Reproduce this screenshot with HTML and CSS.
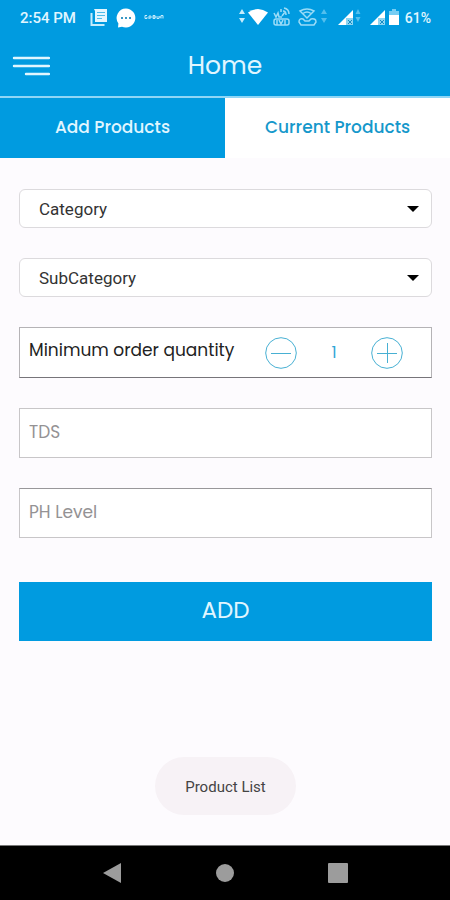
FILE: index.html
```html
<!DOCTYPE html>
<html lang="en">
<head>
<meta charset="utf-8">
<meta name="viewport" content="width=device-width, initial-scale=1">
<title>Home</title>
<link rel="stylesheet" href="styles.css">
</head>
<body>
<div class="status">
  <span class="time">2:54 PM</span>
  <div class="notices">
    <svg width="18" height="20" viewBox="0 0 18 20" aria-hidden="true">
      <path d="M4 1h13v13H5V3z" fill="#e3f6ff"/>
      <path d="M1.500 5v12h13" fill="none" stroke="#c5ecfc" stroke-width="2"/>
      <path d="M7 4.500h8M7 7.500h8M7 10.500h5" stroke="#4dbbe9" stroke-width="1"/>
    </svg>
    <svg width="20" height="20" viewBox="0 0 20 20" aria-hidden="true">
      <path d="M10 .5a9.500 9.500 0 1 1-4 18.200L2 19.500l.4-4A9.500 9.500 0 0 1 10 .5z" fill="#fff"/>
      <path d="M5 10h2M9 10h2M13 10h2" stroke="#3797c4" stroke-width="2"/>
    </svg>
    <svg width="20" height="20" viewBox="0 0 20 20" fill="none" stroke="#c5ecfc" aria-hidden="true">
      <path d="M3 7.500H1v3h2V9M5 11V8h2v2H5M9 10.500v-3h2v3H9M9 9h3M13 8v2.500h2V8M15 9h2M17 10.500v-3h2v3"/>
    </svg>
  </div>
  <div class="signals">
    <svg width="90" height="24" viewBox="239 6 90 24" aria-hidden="true">
      <path d="M242 9l3 5h-6zM242 23l-3-5h6z" fill="#c5ecfc"/>
      <path d="M248 12.500q10-7 20 0L258 25z" fill="#fff"/>
      <g fill="none" stroke="#9bdcf7">
        <path d="M274 13l2 4 2-4 1 4h3M281 12v-3M282 16l3-4M284 8q5 1 5 6M283 11q3 0 3 4" stroke-width="1.500"/>
        <rect x="274" y="19" width="15" height="6" rx="2" stroke-width="1.500"/>
        <path d="M277 20v5M279 20l2 4 2-4M285 20v5" stroke-width="1.500"/>
        <path d="M300 11q7-4 14 0L307 18zM303 13.500q4-3 8 0" stroke-width="1.500"/>
        <path d="M299 22q0-4 4-3l2 2h4l2-2q5-1 5 3l-2 3h-13z" stroke-width="1.500"/>
      </g>
      <path d="M324 9l3 5h-6zM324 23l-3-5h6z" fill="#52bfed"/>
    </svg>
    <svg width="23" height="24" viewBox="338 6 23 24" aria-hidden="true">
      <path d="M353 10v15h-15z" fill="#fff"/>
      <path d="M346 18h7v7h-7z" fill="#8ed5f2"/>
      <path d="M348 20l4 4M352 20l-4 4" stroke="#168cc4"/>
      <path d="M358 9l2.500 5h-5zM358 22l-2.500-5h5z" fill="#52bfed"/>
    </svg>
    <svg width="30" height="24" viewBox="370 6 30 24" aria-hidden="true">
      <path d="M385 10v15h-15z" fill="#fff"/>
      <path d="M378 18h7v7h-7z" fill="#8ed5f2"/>
      <path d="M380 20l4 4M384 20l-4 4" stroke="#168cc4"/>
      <path d="M389 11h3V9h4v2h3v5h-10z" fill="#76cdf3"/>
      <path d="M389 15h10v10h-10z" fill="#fff"/>
    </svg>
    <span class="charge">61%</span>
  </div>
</div>
<header class="bar">
  <button class="menu" type="button" aria-label="Menu">
    <svg width="38" height="22" viewBox="0 0 38 22" stroke="#e0f6ff" stroke-width="2.400" stroke-linecap="round" aria-hidden="true">
      <path d="M2 2h35M2 10h35M14 18h23"/>
    </svg>
  </button>
  <h1>Home</h1>
</header>
<nav class="tabs">
  <a class="tab active" href="#add">Add Products</a>
  <a class="tab" href="#current">Current Products</a>
</nav>
<main>
  <form class="form" id="add">
    <div class="pick">
      <select aria-label="Category"><option>Category</option></select>
      <svg class="caret" width="12" height="6" viewBox="0 0 12 6" aria-hidden="true"><path d="M0 0h12L6 6z"/></svg>
    </div>
    <div class="pick">
      <select aria-label="SubCategory"><option>SubCategory</option></select>
      <svg class="caret" width="12" height="6" viewBox="0 0 12 6" aria-hidden="true"><path d="M0 0h12L6 6z"/></svg>
    </div>
    <div class="quantity">
      <span class="label">Minimum order quantity</span>
      <div class="stepper">
        <button type="button" aria-label="Decrease">
          <svg width="32" height="32" viewBox="0 0 32 32" aria-hidden="true"><circle cx="16" cy="16" r="15.300"/><path d="M6 16.500h20"/></svg>
        </button>
        <output>1</output>
        <button type="button" aria-label="Increase">
          <svg width="32" height="32" viewBox="0 0 32 32" aria-hidden="true"><circle cx="16" cy="16" r="15.300"/><path d="M6 16.500h20M16.500 6v20"/></svg>
        </button>
      </div>
    </div>
    <input class="field" type="text" placeholder="TDS" aria-label="TDS">
    <input class="field strong" type="text" placeholder="PH Level" aria-label="PH Level">
    <button class="add" type="button">ADD</button>
  </form>
  <div class="toast" role="status">Product List</div>
</main>
<footer class="system">
  <button type="button" aria-label="Back"><svg width="20" height="20" viewBox="0 0 20 20"><path d="M1 10L19 0v20z"/></svg></button>
  <button type="button" aria-label="Home screen"><svg width="20" height="20" viewBox="0 0 20 20"><circle cx="10" cy="10" r="9"/></svg></button>
  <button type="button" aria-label="Recent apps"><svg width="20" height="20" viewBox="0 0 20 20"><rect width="20" height="20" rx="1"/></svg></button>
</footer>
</body>
</html>
```
FILE: styles.css
```css
* { box-sizing: border-box; }

body {
  margin: 0;
  min-height: 100vh;
  display: flex;
  flex-direction: column;
  background: #fdfbfe;
  color: #222;
  font-family: Poppins, Inter, sans-serif;
  font-size: 17px;
}

button {
  margin: 0;
  padding: 0;
  border: 0;
  background: none;
  font: inherit;
}

svg { display: block; }

.status {
  display: flex;
  align-items: center;
  height: 36px;
  padding: 0 19px 0 20px;
  background: #009be0;
  color: #e0f6ff;
  font-family: Roboto, sans-serif;
  font-size: 15px;
  font-weight: 500;
}

.notices {
  display: flex;
  gap: 8px;
  margin-left: 14px;
}

.signals {
  display: flex;
  align-items: center;
  gap: 9px;
  margin-left: auto;
}

.charge {
  margin-left: -4px;
  font-size: 14px;
}

.bar {
  display: grid;
  grid-template-columns: 1fr auto 1fr;
  align-items: center;
  height: 62px;
  padding: 0 12px;
  border-bottom: 2px solid #8fd6f6;
  background: #009be0;
  color: #e0f6ff;
}

.menu { justify-self: start; padding-top: 2px; }

h1 {
  margin: 0;
  font-size: 25px;
  font-weight: 400;
}

.tabs { display: flex; }

.tab {
  flex: 1;
  height: 60px;
  padding-top: 18px;
  background: #fff;
  color: #1598cb;
  font-size: 17px;
  font-weight: 500;
  line-height: 22px;
  text-align: center;
  text-decoration: none;
}

.tab.active {
  background: #009be0;
  color: #e0f6ff;
}

main {
  flex: 1;
  display: flex;
  flex-direction: column;
  padding: 31px 18px 30px 19px;
}

.form {
  display: flex;
  flex-direction: column;
  gap: 30px;
}

.pick {
  display: grid;
  align-items: center;
}

.pick > * { grid-area: 1 / 1; }

.pick select {
  width: 100%;
  height: 39px;
  padding: 0 19px;
  border: 1px solid #dcdadd;
  border-radius: 6px;
  appearance: none;
  background: #fff;
  color: #333;
  font-family: Roboto, sans-serif;
  font-size: 17px;
}

.caret {
  justify-self: end;
  margin-right: 13px;
  pointer-events: none;
}

.quantity {
  display: flex;
  justify-content: space-between;
  height: 51px;
  padding: 0 28px 0 9px;
  border: 1px solid #b5b3b6;
  border-bottom-color: #77757a;
  background: #fff;
}

.label {
  padding-top: 11px;
  font-size: 17px;
  line-height: 22px;
}

.stepper {
  display: flex;
  align-items: center;
  justify-content: space-between;
  width: 138px;
  color: #2fa6d6;
  font-size: 16px;
}

.stepper svg {
  fill: none;
  stroke: #48b0d3;
}

.field {
  width: 100%;
  height: 50px;
  padding: 0 9px 2px;
  border: 1px solid #c8c6c8;
  border-radius: 0;
  background: #fff;
  font: inherit;
}

.field.strong {
  border-top-color: #99979a;
}

.field::placeholder { color: #949294; opacity: 1; }

.add {
  height: 59px;
  margin-top: 14px;
  padding-bottom: 4px;
  background: #009be0;
  color: #e0f6ff;
  font-size: 23px;
}

.toast {
  align-self: center;
  margin-top: auto;
  padding: 20px 30px 18px;
  border-radius: 29px;
  background: #f7f2f6;
  color: #444;
  font-family: Roboto, sans-serif;
  font-size: 15px;
  line-height: 20px;
}

.system {
  display: flex;
  align-items: center;
  justify-content: center;
  gap: 93px;
  height: 55px;
  border-top: 1px solid #777;
  background: #000;
}

.system svg { fill: #9c9c9c; }
```
